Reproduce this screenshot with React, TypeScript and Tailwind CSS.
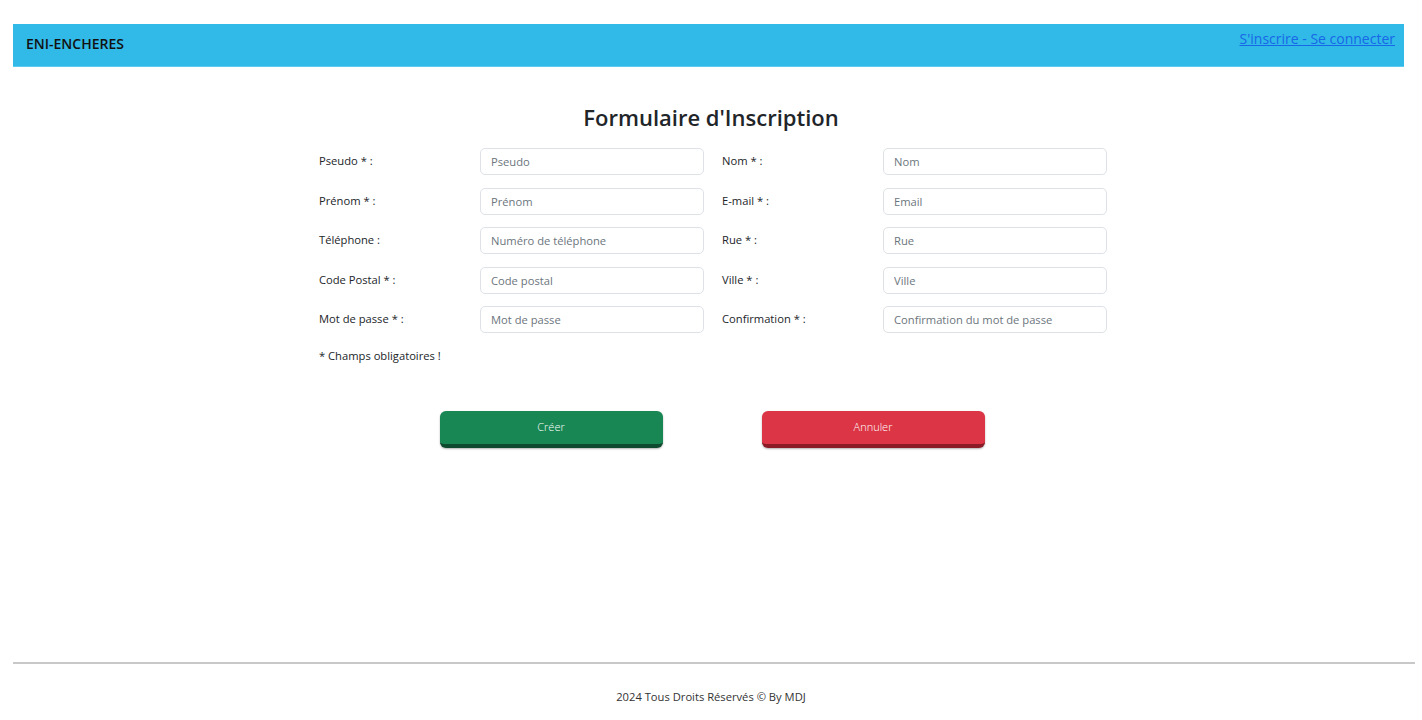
const fields: [string, string, string][] = [
  ['Pseudo * :', 'Pseudo', 'text'],
  ['Nom * :', 'Nom', 'text'],
  ['Prénom * :', 'Prénom', 'text'],
  ['E-mail * :', 'Email', 'email'],
  ['Téléphone :', 'Numéro de téléphone', 'tel'],
  ['Rue * :', 'Rue', 'text'],
  ['Code Postal * :', 'Code postal', 'text'],
  ['Ville * :', 'Ville', 'text'],
  ['Mot de passe * :', 'Mot de passe', 'password'],
  ['Confirmation * :', 'Confirmation du mot de passe', 'password'],
];

function Field({ label, placeholder, type }: { label: string; placeholder: string; type: string }) {
  return (
    <div className="flex items-center">
      <label className="w-[161px] text-[11.2px] text-[#212529]">{label}</label>
      <input
        type={type}
        placeholder={placeholder}
        className="w-[224px] h-[27px] rounded-[5px] border border-[#dee2e6] bg-white px-[10px] text-[11.2px] text-[#212529] placeholder:text-[#6c757d] outline-none"
      />
    </div>
  );
}

export default function App() {
  return (
    <div className="min-h-[720px] bg-white pt-[24px] font-['Open_Sans',sans-serif] text-[#212529]">
      <header className="ml-[13px] w-[1391px] h-[43px] bg-[#31b9e7] border-b border-[#5dcaf0] flex justify-between">
        <span className="pl-[13px] pt-[9px] text-[14px] font-semibold text-[#111]">ENI-ENCHERES</span>
        <a href="#" className="pr-[9px] pt-[4px] text-[14px] text-[#1768e8] underline">
          S'inscrire - Se connecter
        </a>
      </header>

      <main className="flex flex-col items-center">
        <h1 className="mt-[34px] text-[22px] font-semibold leading-[32px] text-[#212529]">Formulaire d'Inscription</h1>
        <div className="mt-[15px] ml-[4px] w-[788px]">
          <div className="grid grid-cols-[385px_385px] gap-x-[18px] gap-y-[12.5px]">
            {fields.map(([label, placeholder, type]) => (
              <Field key={label} label={label} placeholder={placeholder} type={type} />
            ))}
          </div>
          <p className="mt-[15px] text-[11.2px] leading-[16px]">* Champs obligatoires !</p>
        </div>
        <div className="mt-[47px] ml-[2px] flex gap-[99px]">
          <button className="w-[223px] h-[37px] rounded-[6px] bg-[#198754] border-b-[4px] border-[#0e4a2d] shadow-[0_1px_2px_rgba(0,0,0,0.3)] text-[11px] font-light text-white">
            Créer
          </button>
          <button className="w-[223px] h-[37px] rounded-[6px] bg-[#dc3545] border-b-[4px] border-[#8b1c27] shadow-[0_1px_2px_rgba(0,0,0,0.3)] text-[11px] font-light text-white">
            Annuler
          </button>
        </div>
      </main>

      <footer className="mt-[214px]">
        <hr className="ml-[13px] w-[1402px] border-t-2 border-[#c8c8c8]" />
        <p className="mt-[24px] text-center text-[11.2px] leading-[18px] text-[#333]">2024 Tous Droits Réservés © By MDJ</p>
      </footer>
    </div>
  );
}
